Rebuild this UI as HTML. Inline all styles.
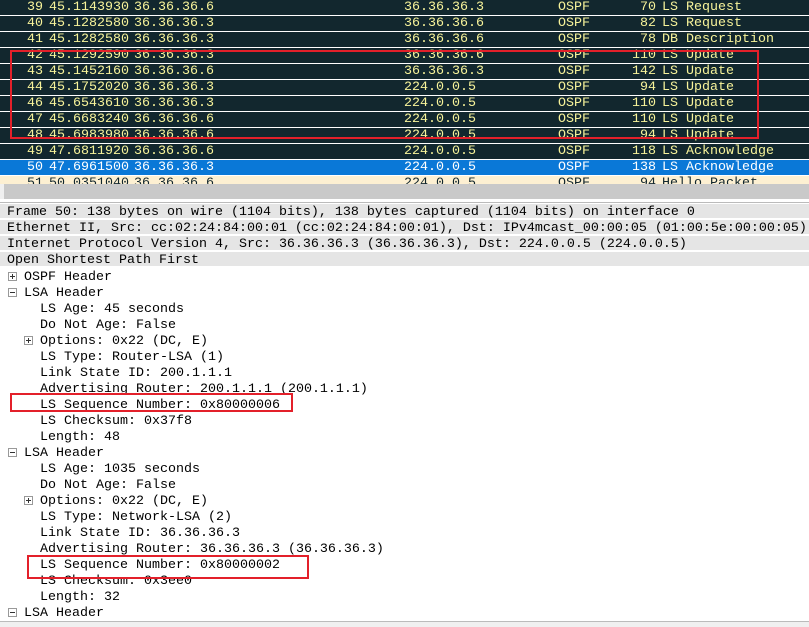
<!DOCTYPE html>
<html><head><meta charset="utf-8"><style>
body{margin:0;width:809px;height:626px;overflow:hidden;background:#fff;font-family:"Liberation Mono",monospace;font-size:13.33px;position:relative}
.r{position:absolute;left:0;width:809px;height:15px;border-bottom:1px solid #fff;background:#12272e;color:#f7f39a;line-height:15px;white-space:pre}
.r span{position:absolute;top:0}
.sel{background:#0a78d7;color:#fff}
.c1{left:27px}.c2{left:49px}.c3{left:134px}.c4{left:404px}.c5{left:558px}.c6{right:153px;text-align:right}.c7{left:662px}
.d{position:absolute;left:0;width:809px;height:15px;line-height:17px;background:#e5e5e5;border-bottom:1px solid #fff;white-space:pre;color:#000;padding-left:7px;box-sizing:border-box}
.t{position:absolute;height:16px;line-height:19px;white-space:pre;color:#000}
.ic{position:absolute;width:7px;height:7px;border:1px solid #999;background:#fff}
.ic:before{content:"";position:absolute;left:1px;top:3px;width:5px;height:1px;background:#333}
.p:after{content:"";position:absolute;left:3px;top:1px;width:1px;height:5px;background:#333}
.box{position:absolute;border:2px solid #e3202a}
</style></head><body>
<div class="r" style="top:0"><span class="c1">39</span><span class="c2">45.1143930</span><span class="c3">36.36.36.6</span><span class="c4">36.36.36.3</span><span class="c5">OSPF</span><span class="c6">70</span><span class="c7">LS Request</span></div>
<div class="r" style="top:16px"><span class="c1">40</span><span class="c2">45.1282580</span><span class="c3">36.36.36.3</span><span class="c4">36.36.36.6</span><span class="c5">OSPF</span><span class="c6">82</span><span class="c7">LS Request</span></div>
<div class="r" style="top:32px"><span class="c1">41</span><span class="c2">45.1282580</span><span class="c3">36.36.36.3</span><span class="c4">36.36.36.6</span><span class="c5">OSPF</span><span class="c6">78</span><span class="c7">DB Description</span></div>
<div class="r" style="top:48px"><span class="c1">42</span><span class="c2">45.1292590</span><span class="c3">36.36.36.3</span><span class="c4">36.36.36.6</span><span class="c5">OSPF</span><span class="c6">110</span><span class="c7">LS Update</span></div>
<div class="r" style="top:64px"><span class="c1">43</span><span class="c2">45.1452160</span><span class="c3">36.36.36.6</span><span class="c4">36.36.36.3</span><span class="c5">OSPF</span><span class="c6">142</span><span class="c7">LS Update</span></div>
<div class="r" style="top:80px"><span class="c1">44</span><span class="c2">45.1752020</span><span class="c3">36.36.36.3</span><span class="c4">224.0.0.5</span><span class="c5">OSPF</span><span class="c6">94</span><span class="c7">LS Update</span></div>
<div class="r" style="top:96px"><span class="c1">46</span><span class="c2">45.6543610</span><span class="c3">36.36.36.3</span><span class="c4">224.0.0.5</span><span class="c5">OSPF</span><span class="c6">110</span><span class="c7">LS Update</span></div>
<div class="r" style="top:112px"><span class="c1">47</span><span class="c2">45.6683240</span><span class="c3">36.36.36.6</span><span class="c4">224.0.0.5</span><span class="c5">OSPF</span><span class="c6">110</span><span class="c7">LS Update</span></div>
<div class="r" style="top:128px"><span class="c1">48</span><span class="c2">45.6983980</span><span class="c3">36.36.36.6</span><span class="c4">224.0.0.5</span><span class="c5">OSPF</span><span class="c6">94</span><span class="c7">LS Update</span></div>
<div class="r" style="top:144px"><span class="c1">49</span><span class="c2">47.6811920</span><span class="c3">36.36.36.6</span><span class="c4">224.0.0.5</span><span class="c5">OSPF</span><span class="c6">118</span><span class="c7">LS Acknowledge</span></div>
<div class="r sel" style="top:160px"><span class="c1">50</span><span class="c2">47.6961500</span><span class="c3">36.36.36.3</span><span class="c4">224.0.0.5</span><span class="c5">OSPF</span><span class="c6">138</span><span class="c7">LS Acknowledge</span></div>
<div class="r" style="top:176px;height:8px;overflow:hidden;background:#fdf0d2;color:#12272e;border:0"><span class="c1">51</span><span class="c2">50.0351040</span><span class="c3">36.36.36.6</span><span class="c4">224.0.0.5</span><span class="c5">OSPF</span><span class="c6">94</span><span class="c7">Hello Packet</span></div>
<div style="position:absolute;top:184px;left:0;width:809px;height:15px;background:#f0f0f0"><div style="position:absolute;left:4px;top:0;width:805px;height:15px;background:#c9c9c9"></div></div>
<div style="position:absolute;top:202px;left:0;width:809px;height:1px;background:#bbb"></div>
<div class="d" style="top:204px">Frame 50: 138 bytes on wire (1104 bits), 138 bytes captured (1104 bits) on interface 0</div>
<div class="d" style="top:220px">Ethernet II, Src: cc:02:24:84:00:01 (cc:02:24:84:00:01), Dst: IPv4mcast_00:00:05 (01:00:5e:00:00:05)</div>
<div class="d" style="top:236px">Internet Protocol Version 4, Src: 36.36.36.3 (36.36.36.3), Dst: 224.0.0.5 (224.0.0.5)</div>
<div class="d" style="top:252px">Open Shortest Path First</div>
<div class="ic p" style="left:8px;top:272px"></div><div class="t" style="left:24px;top:268px">OSPF Header</div>
<div class="ic" style="left:8px;top:288px"></div><div class="t" style="left:24px;top:284px">LSA Header</div>
<div class="t" style="left:40px;top:300px">LS Age: 45 seconds</div>
<div class="t" style="left:40px;top:316px">Do Not Age: False</div>
<div class="ic p" style="left:24px;top:336px"></div><div class="t" style="left:40px;top:332px">Options: 0x22 (DC, E)</div>
<div class="t" style="left:40px;top:348px">LS Type: Router-LSA (1)</div>
<div class="t" style="left:40px;top:364px">Link State ID: 200.1.1.1</div>
<div class="t" style="left:40px;top:380px">Advertising Router: 200.1.1.1 (200.1.1.1)</div>
<div class="t" style="left:40px;top:396px">LS Sequence Number: 0x80000006</div>
<div class="t" style="left:40px;top:412px">LS Checksum: 0x37f8</div>
<div class="t" style="left:40px;top:428px">Length: 48</div>
<div class="ic" style="left:8px;top:448px"></div><div class="t" style="left:24px;top:444px">LSA Header</div>
<div class="t" style="left:40px;top:460px">LS Age: 1035 seconds</div>
<div class="t" style="left:40px;top:476px">Do Not Age: False</div>
<div class="ic p" style="left:24px;top:496px"></div><div class="t" style="left:40px;top:492px">Options: 0x22 (DC, E)</div>
<div class="t" style="left:40px;top:508px">LS Type: Network-LSA (2)</div>
<div class="t" style="left:40px;top:524px">Link State ID: 36.36.36.3</div>
<div class="t" style="left:40px;top:540px">Advertising Router: 36.36.36.3 (36.36.36.3)</div>
<div class="t" style="left:40px;top:556px">LS Sequence Number: 0x80000002</div>
<div class="t" style="left:40px;top:572px">LS Checksum: 0x3ee0</div>
<div class="t" style="left:40px;top:588px">Length: 32</div>
<div class="ic" style="left:8px;top:608px"></div><div class="t" style="left:24px;top:604px">LSA Header</div>
<div style="position:absolute;top:621px;left:0;width:809px;height:5px;background:#f0f0f0;border-top:1px solid #bbb"></div>
<div class="box" style="left:10px;top:50px;width:745px;height:85px"></div>
<div class="box" style="left:10px;top:393px;width:279px;height:15px"></div>
<div class="box" style="left:27px;top:555px;width:278px;height:20px"></div>
</body></html>
